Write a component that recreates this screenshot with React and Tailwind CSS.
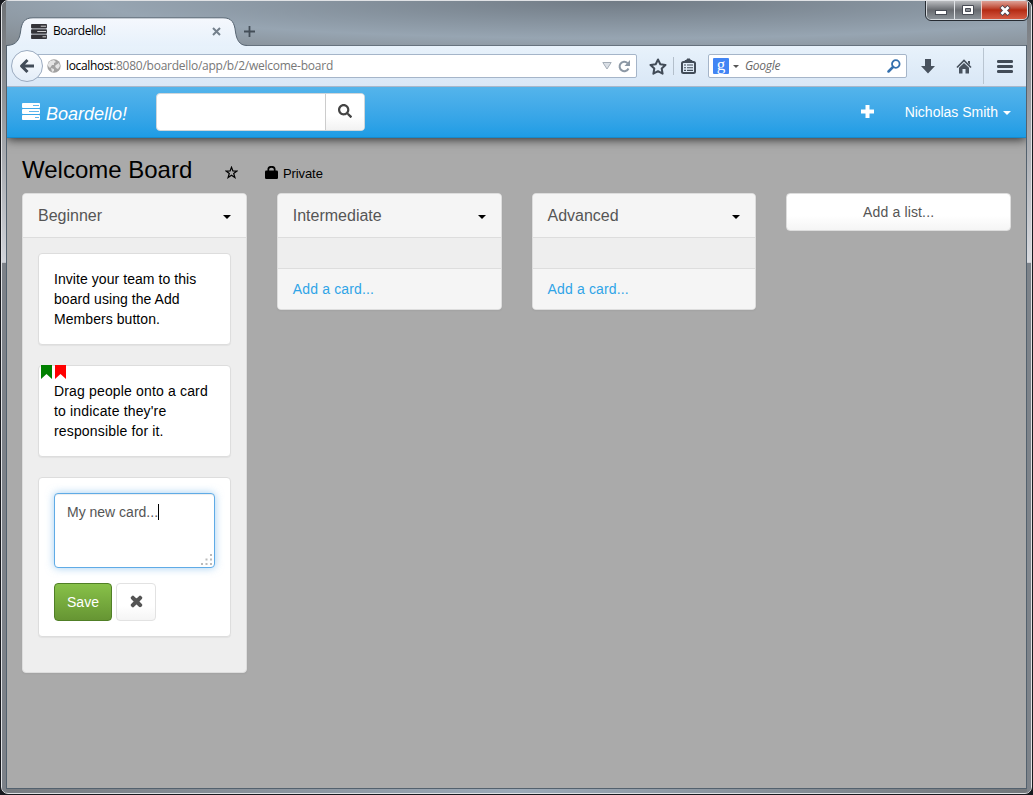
import React from 'react';
import { FaPlus, FaSearch, FaTimes } from 'react-icons/fa';

function Bars({ className, fill, line }) {
  return (
    <svg className={className} viewBox="0 0 18 17" fill={fill}>
      <rect x="0" y="0" width="18" height="5" rx="0.9" />
      <rect x="0" y="6" width="18" height="5" rx="0.9" />
      <rect x="0" y="12" width="18" height="5" rx="0.9" />
      <path d="M11 2.5h6M7 8.5h10M13 14.5h4" stroke={line} strokeWidth="1" />
    </svg>
  );
}

function Caret({ className }) {
  return (
    <svg className={className} width="8" height="4" viewBox="0 0 8 4" fill="currentColor">
      <path d="M0 0h8L4 4z" />
    </svg>
  );
}

function TitleBar() {
  return (
    <div className="relative h-[44px] shrink-0">
      <svg className="absolute left-0 top-[16px]" width="244" height="29" viewBox="0 0 244 29">
        <defs>
          <linearGradient id="tab" x1="0" y1="0" x2="0" y2="1">
            <stop offset="0" stopColor="#f5f8fd" />
            <stop offset="1" stopColor="#e7f1fb" />
          </linearGradient>
        </defs>
        <path d="M0 29V28.500C10 28 12.500 22 13.500 15C14.500 6 17 .8 26 .8H216C225 .8 227.500 6 228.500 15C229.500 22 232 28.500 240 28.500V29Z" fill="url(#tab)" />
        <path d="M0 28.500C10 28 12.500 22 13.500 15C14.500 6 17 .8 26 .8H216C225 .8 227.500 6 228.500 15C229.500 22 232 28.500 240 28.500" fill="none" stroke="#586673" />
      </svg>
      <div className="relative top-[16px] flex h-[28px] items-center pl-[24px]">
        <Bars className="h-[15px] w-[16px]" fill="#333338" line="#e5e5e5" />
        <span className="ml-[6px] w-[158px] font-['Open_Sans',sans-serif] text-[12px] tracking-[-0.45px] text-black">Boardello!</span>
        <svg className="ml-[1px]" width="9" height="9" viewBox="0 0 9 9"><path d="M1 1l7 7M8 1l-7 7" stroke="#74808c" strokeWidth="2" /></svg>
        <svg className="ml-[23px]" width="11" height="11" viewBox="0 0 11 11"><path d="M5.500 0v11M0 5.500h11" stroke="#444e58" strokeWidth="1.800" /></svg>
      </div>
      <div className="absolute right-[-2px] top-0 flex h-[19px] w-[102px] overflow-hidden rounded-b-[5px] border border-t-0 border-[#d5d9dd] outline outline-1 outline-[#262b32]">
        <div className="flex w-[27px] items-end justify-center bg-linear-to-b from-[#bbbdc0] from-0% via-[#686b70] via-50% to-[#8b9298] pb-[4px]">
          <svg width="12" height="5"><rect x=".5" y=".5" width="11" height="4" fill="#fff" stroke="#484c55" /></svg>
        </div>
        <div className="flex w-[27px] items-center justify-center border-l border-[#e0e3e6] bg-linear-to-b from-[#bbbdc0] from-0% via-[#686b70] via-50% to-[#8b9298]">
          <svg width="12" height="10" viewBox="0 0 12 10"><path d="M.5.5h11v9H.5z" fill="#fff" stroke="#484c55" /><path d="M3.500 3.500h5v3h-5z" fill="#8c9096" stroke="#484c55" /></svg>
        </div>
        <div className="flex flex-1 items-center justify-center border-l border-[#f0c8c0] bg-linear-to-b from-[#dda197] from-0% via-[#b42a12] via-50% to-[#d65a42]">
          <svg width="12" height="11" viewBox="0 0 12 11"><path d="M2 1.500l8 8M10 1.500l-8 8" stroke="#4c4650" strokeWidth="4.500" /><path d="M2.500 2l7 7M9.500 2l-7 7" stroke="#fff" strokeWidth="2.700" /></svg>
        </div>
      </div>
    </div>
  );
}

function Toolbar() {
  return (
    <div className="flex h-[42px] shrink-0 items-center border-b border-t border-b-[#a8b7ca] border-t-[#66727e] bg-linear-to-b from-[#e8f2fb] to-[#d9e7f6] pl-[4px]">
      <div className="relative z-10 flex h-[32px] w-[32px] items-center justify-center rounded-full border border-[#9babc0] bg-linear-to-b from-[#fdfeff] to-[#e3edf8]">
        <svg width="16" height="16" viewBox="0 0 16 16" fill="none" stroke="#424c58" strokeWidth="3"><path d="M8.500 2L2.500 8l6 6M3 8h12" strokeLinejoin="round" /></svg>
      </div>
      <div className="ml-[-6px] flex h-[24px] w-[600px] items-center rounded-r-[2px] border border-[#a5b5c9] bg-white pl-[9px]">
        <svg width="14" height="14" viewBox="0 0 14 14"><circle cx="7" cy="7" r="6.700" fill="#a2a2a2" /><path d="M3 2l4-1 2 2-2 1 0 2-2 0-2 3-2-2 0-2zM9 6l3-2 1 3-2 3-2-1-1-2zM4 9l3 1 0 2-2 1z" fill="#e4e4e4" /></svg>
        <span className="ml-[5px] whitespace-nowrap font-['Open_Sans',sans-serif] text-[12px] tracking-[-0.24px] text-[#777]"><span className="tracking-[-0.36px] text-black">localhost</span>:8080/boardello/app/b/2/welcome-board</span>
        <svg className="ml-auto" width="10" height="8" viewBox="0 0 10 8"><path d="M.8.5h8.400L5 7z" fill="#dadfe5" stroke="#a4adb7" /></svg>
        <svg className="ml-[6px] mr-[5px]" width="13" height="13" viewBox="0 0 13 13"><path d="M10.500 8.500A4.700 4.700 0 1 1 9.500 3" fill="none" stroke="#8c98a5" strokeWidth="2" /><path d="M12 0v6H6.500z" fill="#8c98a5" /></svg>
      </div>
      <svg className="ml-[12px]" width="18" height="17" viewBox="0 0 18 17"><path d="M9 1.500l2.300 4.700 5.200.7-3.800 3.600.9 5.200L9 13.200l-4.600 2.500.9-5.200L1.500 6.900l5.200-.7z" fill="none" stroke="#424c58" strokeWidth="2" strokeLinejoin="round" /></svg>
      <div className="ml-[6px] h-[18px] w-px bg-[#b3bfcb]" />
      <svg className="ml-[7px]" width="15" height="16" viewBox="0 0 15 16"><rect x="1" y="4" width="13" height="11" rx="1.500" fill="none" stroke="#424c58" strokeWidth="2" /><path d="M4 4V2.500h2V1h3v1.500h2V4z" fill="#424c58" stroke="#424c58" /><path d="M3 7h2M6 7h6M3 9.700h2M6 9.700h6M3 12.400h2M6 12.400h6" stroke="#424c58" strokeWidth="1.100" /></svg>
      <div className="ml-[12px] flex h-[24px] w-[199px] items-center rounded-[2px] border border-[#a5b5c9] bg-white pl-[4px]">
        <span className="flex h-[16px] w-[16px] items-center justify-center rounded-[1px] bg-[#4285f4] pb-[4px] font-['Liberation_Serif',serif] text-[17px] leading-none text-white">g</span>
        <svg className="ml-[4px]" width="6" height="3"><path d="M0 0h6L3 3z" fill="#555" /></svg>
        <span className="ml-[6px] font-['Open_Sans',sans-serif] text-[12px] italic tracking-[-0.3px] text-[#686868]">Google</span>
        <svg className="ml-auto mr-[5px]" width="14" height="14" viewBox="0 0 14 14" fill="none" stroke="#3470ae"><circle cx="8.800" cy="5" r="3.800" strokeWidth="1.800" /><path d="M6 8l-4.500 4.500" strokeWidth="2.500" strokeLinecap="round" /></svg>
      </div>
      <svg className="ml-[14px]" width="14" height="15" viewBox="0 0 14 15"><path d="M4 0h6v7h4l-7 7.500L0 7h4z" fill="#48525e" /></svg>
      <svg className="ml-[21px]" width="16" height="15" viewBox="0 0 16 15"><path d="M1 8.500L8 1.500l7 7" fill="none" stroke="#48525e" strokeWidth="1.700" /><path d="M12 2h2v4l-2-2zM3 8.800L8 4l5 4.800V14.500H9.500V10h-3v4.500H3z" fill="#48525e" /></svg>
      <div className="ml-[11px] h-[36px] w-px bg-[#b9c5d1]" />
      <svg className="ml-[13px]" width="16" height="13" viewBox="0 0 16 13"><path d="M1.300 1.500h13.400M1.300 6.500h13.400M1.300 11.500h13.400" stroke="#424c58" strokeWidth="2.800" strokeLinecap="round" /></svg>
    </div>
  );
}

function Navbar() {
  return (
    <div className="relative z-10 flex h-[51px] shrink-0 items-center border-b border-[#178acc] bg-linear-to-b from-[#54b4eb] to-[#1d9ce5] pl-[15px] text-white shadow-[0_1px_10px_rgba(0,0,0,0.8)] [clip-path:inset(0_0_-20px_0)]">
      <Bars className="mb-[2px] h-[17px] w-[18px]" fill="#fff" line="#62b8ec" />
      <span className="ml-[6px] w-[110px] pt-[3px] text-[18px] italic leading-[20px]">Boardello!</span>
      <div className="flex h-[38px] w-[209px] overflow-hidden rounded-[4px] border border-[#cfd6da] bg-white">
        <div className="w-[169px] border-r border-[#ccc]" />
        <div className="flex flex-1 items-center justify-center bg-linear-to-b from-white from-60% to-[#f2f2f2] pb-[2px] text-[#444]"><FaSearch size={14} /></div>
      </div>
      <svg className="mb-[2px] ml-auto" width="13" height="13" viewBox="0 0 13 13"><path d="M6.500 0v13M0 6.500h13" stroke="#fff" strokeWidth="4" /></svg>
      <span className="ml-[31px] text-[14px] leading-[20px]">Nicholas Smith</span>
      <Caret className="ml-[5px] mr-[15px] mt-[2px]" />
    </div>
  );
}

function List({ title, children, footer }) {
  return (
    <section className="overflow-hidden rounded-[4px] border border-[#ddd] bg-[#eee] shadow-[0_1px_2px_rgba(0,0,0,0.05)]">
      <header className="flex h-[44px] items-center justify-between border-b border-[#ddd] bg-[#f5f5f5] pl-[15px] pr-[15px] text-[16px] text-[#555]">
        <span>{title}</span>
        <Caret className="mt-[3px] text-black" />
      </header>
      <div className="flex flex-col px-[15px] pt-[15px] pb-[15px]">{children}</div>
      {footer && <footer className="h-[41px] border-t border-[#ddd] bg-[#f5f5f5] px-[15px] pt-[10px] leading-[20px] tracking-[0.15px] text-[#2fa4e7]">Add a card...</footer>}
    </section>
  );
}

function Card({ children }) {
  return <article className="relative mb-[20px] rounded-[4px] border border-[#ddd] bg-white p-[15px] leading-[20px] text-black shadow-[0_1px_1px_rgba(0,0,0,0.05)]">{children}</article>;
}

function Flag({ className }) {
  return <svg className={className} width="11" height="14" viewBox="0 0 11 14" fill="currentColor"><path d="M0 0h11v14L5.500 9 0 14z" /></svg>;
}

function Board() {
  return (
    <main className="flex-1 bg-[#aaa] px-[15px] pt-[17px] text-[14px]">
      <div className="flex h-[38px] items-start text-black">
        <h1 className="w-[203px] whitespace-nowrap text-[24px] leading-[30px]">Welcome Board</h1>
        <svg className="mt-[11px]" width="13" height="13" viewBox="0 0 13 13"><path d="M6.500 1.300l1.400 3.700 4 .1-3.200 2.400 1.200 4-3.400-2.300-3.400 2.300 1.200-4L1.100 5.100l4-.1z" fill="none" stroke="#000" strokeWidth="1.200" /></svg>
        <svg className="ml-[27px] mt-[11px]" width="13" height="13" viewBox="0 0 13 13"><path d="M3.300 5V3.500a3.200 2.700 0 0 1 6.400 0V5" fill="none" stroke="#000" strokeWidth="1.700" /><rect y="4.500" width="13" height="8.500" rx="1.200" /></svg>
        <span className="ml-[5px] mt-[9px] text-[13px] leading-[20px] tracking-[-0.1px]">Private</span>
      </div>
      <div className="grid grid-cols-4 items-start gap-[30px]">
        <List title="Beginner">
          <Card><span className="tracking-[0.06px]">Invite your team to this board using the Add Members button.</span></Card>
          <Card>
            <span className="absolute left-[2px] top-[-1px] flex gap-[3px]"><Flag className="text-[#008000]" /><Flag className="text-[#f00]" /></span>
            <span className="tracking-[0.16px]">Drag people onto a card to indicate they're responsible for it.</span>
          </Card>
          <Card>
            <div className="relative h-[75px] rounded-[4px] border border-[#5fabe6] bg-white px-[12px] pt-[8px] text-[#555] shadow-[inset_0_1px_1px_rgba(0,0,0,0.075),0_0_8px_rgba(102,175,233,0.6)]">
              <span className="inline-flex items-center">My new card...<i className="h-[16px] w-px bg-black" /></span>
              <svg className="absolute bottom-[1px] right-[1px]" width="12" height="12" fill="#bbb"><path d="M9 0h2v2H9zM9 4.500h2v2H9zM4.500 4.500h2v2h-2zM9 9h2v2H9zM4.500 9h2v2h-2zM0 9h2v2H0z" /></svg>
            </div>
            <div className="mt-[15px] flex gap-[4px]">
              <button className="h-[38px] w-[58px] rounded-[4px] border border-[#507f26] bg-linear-to-b from-[#88c149] to-[#669533] text-white">Save</button>
              <button className="flex h-[38px] w-[40px] items-center justify-center rounded-[4px] border border-[#e2e2e2] bg-linear-to-b from-white from-60% to-[#f5f5f5] pb-[2px] text-[#555]"><FaTimes size={15} strokeWidth={45} stroke="currentColor" /></button>
            </div>
          </Card>
        </List>
        <List title="Intermediate" footer />
        <List title="Advanced" footer />
        <button className="h-[38px] rounded-[4px] border border-[#ddd] bg-linear-to-b from-white from-60% to-[#f5f5f5] tracking-[0.15px] text-[#555]">Add a list...</button>
      </div>
    </main>
  );
}

export default function App() {
  return (
    <div className="h-[795px] w-[1033px] overflow-hidden bg-[#17191e] font-['Liberation_Sans',Arial,sans-serif] text-[14px]">
      <div className="ml-px flex h-[794px] w-[1031px] overflow-hidden rounded-[7px] border border-[#e0e2e5] bg-linear-to-r from-[#777b80] via-[#9caab8] to-[#73777b]">
        <div className="w-[4px] shrink-0 bg-linear-to-b from-[#6d7175] from-0% via-[#d1d4da] via-[33%] to-[#7c8188] to-[33.1%]" />
        <div className="flex h-[788px] w-[1021px] shrink-0 flex-col border-x border-b border-[#53616e]">
          <div className="-mx-px flex flex-col bg-[radial-gradient(ellipse_at_60%_0%,#717b85_0%,#97a5b2_60%,#82898f_100%)] px-px">
            <TitleBar />
          </div>
          <Toolbar />
          <Navbar />
          <Board />
        </div>
        <div className="flex-1 bg-linear-to-b from-[#73777c] from-0% via-[#d9dbe0] via-[33%] to-[#7d838a] to-[33.1%]" />
      </div>
    </div>
  );
}
